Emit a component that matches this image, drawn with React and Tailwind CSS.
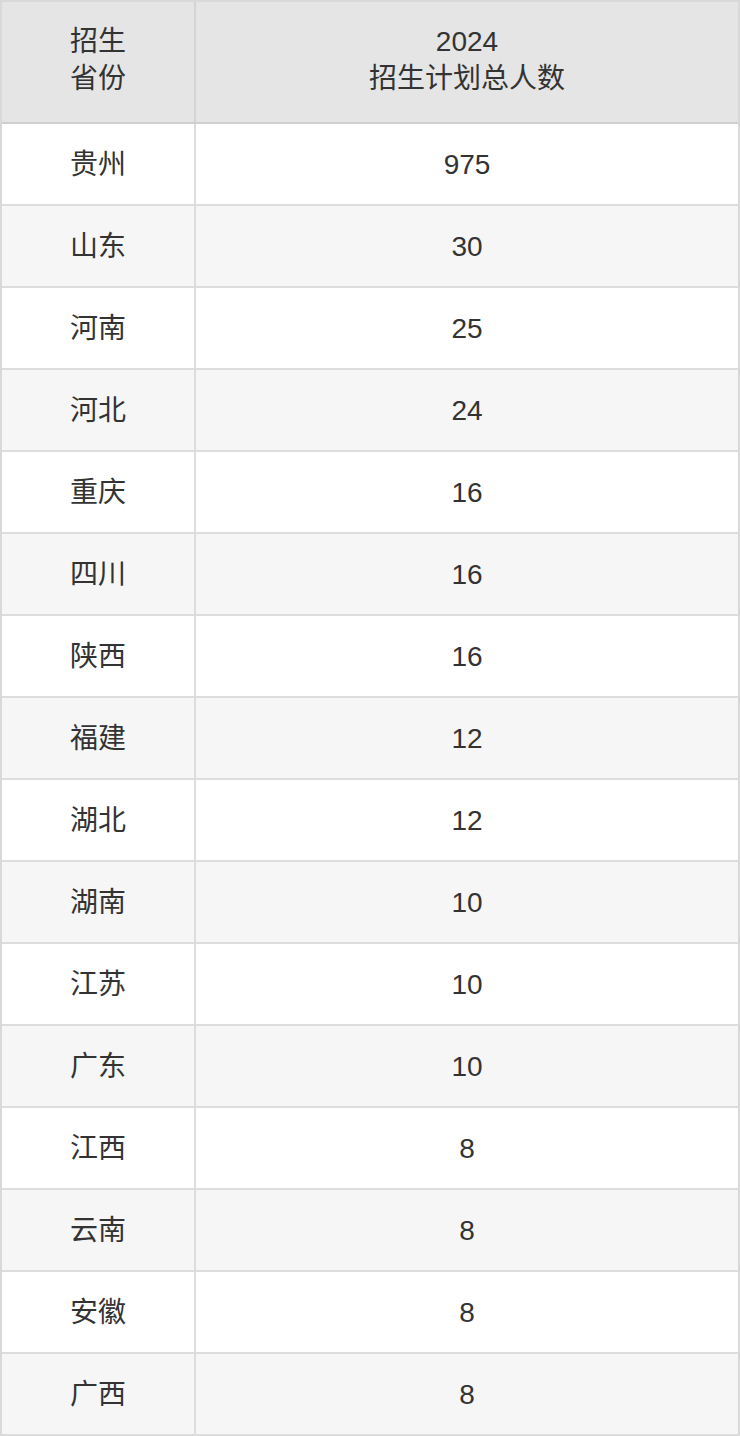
import React from 'react';

const rows = [
  ['贵州', '975'],
  ['山东', '30'],
  ['河南', '25'],
  ['河北', '24'],
  ['重庆', '16'],
  ['四川', '16'],
  ['陕西', '16'],
  ['福建', '12'],
  ['湖北', '12'],
  ['湖南', '10'],
  ['江苏', '10'],
  ['广东', '10'],
  ['江西', '8'],
  ['云南', '8'],
  ['安徽', '8'],
  ['广西', '8'],
];

export default function App() {
  return (
    <div
      className="w-[740px] bg-white text-[#333] text-[28px] leading-[37px]"
      style={{ fontFamily: '"Liberation Sans", "Noto Sans CJK SC", sans-serif' }}
    >
      <div className="border-2 border-b-0 border-[#d9d9d9]">
        {/* Header */}
        <div className="flex h-[122px] bg-[#e5e5e5] border-b-2 border-[#cfcfcf]">
          <div className="w-[194px] flex items-center justify-center text-center border-r-2 border-[#d4d4d4] pb-[4px]">
            招生
            <br />
            省份
          </div>
          <div className="flex-1 flex items-center justify-center text-center pb-[4px]">
            2024
            <br />
            招生计划总人数
          </div>
        </div>

        {/* Rows */}
        {rows.map(([name, count], i) => (
          <div
            key={name}
            className={`flex h-[82px] border-b-2 border-[#dddddd] ${i % 2 === 1 ? 'bg-[#f6f6f6]' : 'bg-white'}`}
          >
            <div className="w-[194px] flex items-center justify-center border-r-2 border-[#dddddd]">
              {name}
            </div>
            <div className="flex-1 flex items-center justify-center">{count}</div>
          </div>
        ))}
      </div>
    </div>
  );
}
